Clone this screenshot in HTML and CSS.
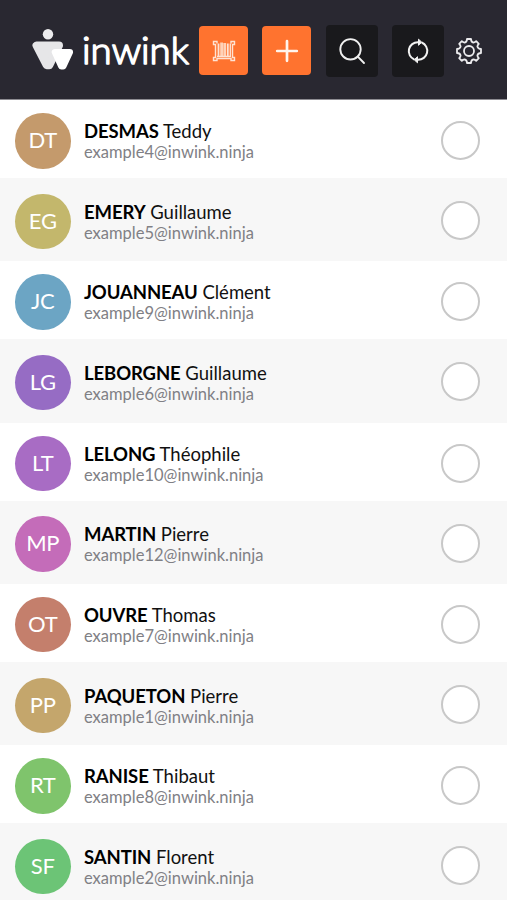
FILE: index.html
```html
<!DOCTYPE html>
<html lang="en">
<head>
<meta charset="utf-8">
<meta name="viewport" content="width=device-width, initial-scale=1">
<title>inwink</title>
<link rel="stylesheet" href="styles.css">
</head>
<body>
<header class="topbar">
  <div class="brand">
    <svg class="brand-mark" viewBox="0 0 42 42" width="42" height="42" aria-hidden="true">
      <circle cx="16" cy="5.200" r="5.200" fill="#ececee"/>
      <path d="M4.500 16.500H27L17.300 36.200H14.700Z" fill="#e6e6e8" stroke="#e6e6e8" stroke-width="8" stroke-linejoin="round"/>
      <path d="M23 23.200H37.800L31.300 37.200H29.300Z" fill="#fff" stroke="#fff" stroke-width="6.500" stroke-linejoin="round"/>
    </svg>
    <svg class="brand-name" viewBox="0 0 112 54" width="112" height="54"><text x="1" y="41" textLength="107" lengthAdjust="spacingAndGlyphs">inwink</text></svg>
  </div>
  <nav class="actions">
    <button class="btn btn-accent" aria-label="Scan">
      <svg viewBox="0 0 24 24" width="24" height="24" fill="none" stroke="#ffe3d3">
        <path stroke-width="1.400" d="M5 4.500V2.500H1.500V5.500H3.500V18.500H1.500V21.500H5V19.500H19V21.500H22.500V18.500H20.500V5.500H22.500V2.500H19V4.500"/>
        <path stroke-width="1.800" d="M6.500 4.500V18M15.800 4.500V18"/>
        <path stroke-width="2.800" stroke="#ffd2b8" d="M9.600 3.500V18M12.700 4V18"/>
        <path stroke-width="1.300" d="M18.300 4.500V18M5 17.500H19"/>
      </svg>
    </button>
    <button class="btn btn-accent" aria-label="Add">
      <svg viewBox="0 0 24 24" width="24" height="24" fill="none" stroke="#fff4ec" stroke-width="2.700" stroke-linecap="round"><path d="M12 2.200V21.800M2.200 12H21.800"/></svg>
    </button>
    <button class="btn btn-dark" aria-label="Search">
      <svg viewBox="0 0 28 28" width="28" height="28" fill="none" stroke="#f0f0f0" stroke-width="1.900" stroke-linecap="round"><circle cx="12.500" cy="12.300" r="10.200"/><path d="M19.800 19.600L26 26"/></svg>
    </button>
    <button class="btn btn-dark" aria-label="Refresh">
      <svg viewBox="0 0 24 26" width="24" height="26" fill="none" stroke="#f2f2f2" stroke-width="2">
        <path d="M8.300 21.500A9 9 0 0 1 12 4.200H14M15.700 4.500A9 9 0 0 1 12 21.800H10"/>
        <path d="M12.500 1.200L15.800 4.200L12.500 7.300ZM11.500 18.700L8.200 21.800L11.500 24.800Z" fill="#f2f2f2" stroke-width="1" stroke-linejoin="round"/>
      </svg>
    </button>
    <button class="btn btn-plain" aria-label="Settings">
      <svg viewBox="0 0 28 28" width="28" height="28" fill="none" stroke="#ececee" stroke-width="1.800" stroke-linejoin="round">
        <path d="M12 2H16Q16 5 18.400 5.600Q20.200 5.300 21.200 4.200L23.800 6.800Q22.500 8 22.400 9.600Q23 12 26 12V16Q23 16 22.400 18.400Q22.500 20 23.800 21.200L21.200 23.800Q20.200 22.700 18.400 22.400Q16 23 16 26H12Q12 23 9.600 22.400Q7.800 22.700 6.800 23.800L4.200 21.200Q5.500 20 5.600 18.400Q5 16 2 16V12Q5 12 5.600 9.600Q5.500 8 4.200 6.800L6.800 4.200Q7.800 5.300 9.600 5.600Q12 5 12 2Z"/>
        <circle cx="14" cy="14" r="5"/>
      </svg>
    </button>
  </nav>
</header>
<main class="list">
  <div class="row"><span class="avatar tan">DT</span><div class="person"><div class="name"><b>DESMAS</b> Teddy</div><div class="mail">example4@inwink.ninja</div></div><span class="check"></span></div>
  <div class="row"><span class="avatar olive">EG</span><div class="person"><div class="name"><b>EMERY</b> Guillaume</div><div class="mail">example5@inwink.ninja</div></div><span class="check"></span></div>
  <div class="row"><span class="avatar blue">JC</span><div class="person"><div class="name"><b>JOUANNEAU</b> Clément</div><div class="mail">example9@inwink.ninja</div></div><span class="check"></span></div>
  <div class="row"><span class="avatar violet">LG</span><div class="person"><div class="name"><b>LEBORGNE</b> Guillaume</div><div class="mail">example6@inwink.ninja</div></div><span class="check"></span></div>
  <div class="row"><span class="avatar purple">LT</span><div class="person"><div class="name"><b>LELONG</b> Théophile</div><div class="mail">example10@inwink.ninja</div></div><span class="check"></span></div>
  <div class="row"><span class="avatar pink">MP</span><div class="person"><div class="name"><b>MARTIN</b> Pierre</div><div class="mail">example12@inwink.ninja</div></div><span class="check"></span></div>
  <div class="row"><span class="avatar brick">OT</span><div class="person"><div class="name"><b>OUVRE</b> Thomas</div><div class="mail">example7@inwink.ninja</div></div><span class="check"></span></div>
  <div class="row"><span class="avatar sand">PP</span><div class="person"><div class="name"><b>PAQUETON</b> Pierre</div><div class="mail">example1@inwink.ninja</div></div><span class="check"></span></div>
  <div class="row"><span class="avatar green">RT</span><div class="person"><div class="name"><b>RANISE</b> Thibaut</div><div class="mail">example8@inwink.ninja</div></div><span class="check"></span></div>
  <div class="row"><span class="avatar emerald">SF</span><div class="person"><div class="name"><b>SANTIN</b> Florent</div><div class="mail">example2@inwink.ninja</div></div><span class="check"></span></div>
</main>
</body>
</html>
```
FILE: styles.css
```css
* { box-sizing: border-box; }
html, body { height: 100%; }
body {
  margin: 0;
  overflow: hidden;
  display: flex;
  flex-direction: column;
  background: #fff;
  color: #111;
  font-family: Lato, "Liberation Sans", sans-serif;
}
.topbar {
  flex: none;
  display: flex;
  align-items: center;
  height: 100px;
  padding-left: 32px;
  background: #292831;
  border-bottom: 1px solid #8d8c92;
}
.brand { display: flex; align-items: center; width: 167px; }
.brand-mark { flex: none; margin-right: 7px; }
.brand-name {
  flex: none;
  font-size: 38px;
  font-weight: 300;
  fill: #fff;
  stroke: #fff;
  stroke-width: 1.600px;
  stroke-linejoin: round;
}
.actions { display: flex; align-items: center; padding-top: 2px; }
.btn {
  display: flex;
  align-items: center;
  justify-content: center;
  flex: none;
  padding: 0;
  border: 0;
  border-radius: 4px;
}
.btn-accent { width: 49px; height: 49px; margin-right: 14px; background: #ff732f; }
.btn-dark { width: 52px; height: 52px; margin-right: 14px; background: #19191c; }
.btn-accent + .btn-dark { margin-left: 1px; }
.btn-plain { width: 28px; height: 52px; margin-left: -3px; background: none; }
.list { flex: 1; min-height: 0; overflow: hidden; }
.row {
  display: flex;
  align-items: flex-start;
  height: 78.200px;
  padding: 13px 27px 0 15px;
}
.row:nth-child(even) { height: 83.100px; padding-top: 15.500px; background: #f7f7f7; }
.avatar {
  flex: none;
  width: 55.500px;
  height: 55.500px;
  margin-right: 13.500px;
  border-radius: 50%;
  color: #fff;
  font-size: 22px;
  line-height: 54px;
  letter-spacing: -.3px;
  text-align: center;
}
.person { flex: 1; padding-top: 7.100px; white-space: nowrap; }
.name { font-size: 18.500px; line-height: 22px; }
.name b { color: #000; letter-spacing: -.1px; }
.mail { color: #808085; font-size: 16.500px; line-height: 20px; }
.check {
  flex: none;
  width: 39px;
  height: 39px;
  margin-top: 8.200px;
  border: 2.500px solid #c8c8c8;
  border-radius: 50%;
  background: #fff;
}
.row:nth-child(even) .person { padding-top: 7px; }
.row:nth-child(even) .check { margin-top: 7.500px; }
.tan { background: #c49a6c; }
.olive { background: #c3b76c; }
.blue { background: #6ca5c4; }
.violet { background: #966cc4; }
.purple { background: #a86cc4; }
.pink { background: #c46cb9; }
.brick { background: #c47f6c; }
.sand { background: #c4a66c; }
.green { background: #7fc46c; }
.emerald { background: #6cc476; }
```
